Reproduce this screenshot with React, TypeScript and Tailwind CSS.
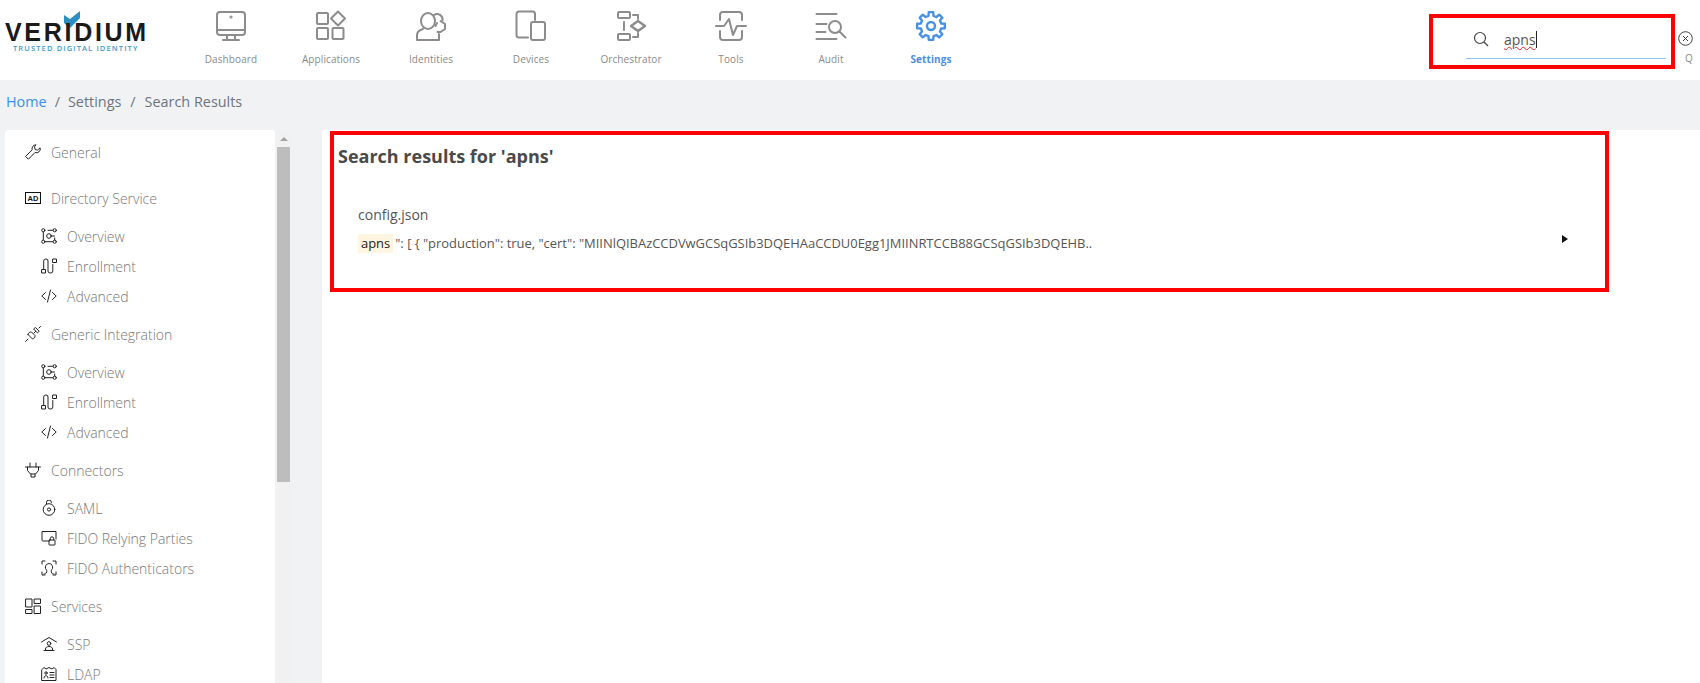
import type { ReactNode } from "react";

const navGray = "#8c8c8c";
const navBlue = "#4a90e2";

function NavSvg({ children, color = navGray, weight = 2 }: { children: ReactNode; color?: string; weight?: number }) {
	return (
		<svg width="32" height="32" viewBox="0 0 32 32" fill="none" stroke={color} strokeWidth={weight} strokeLinecap="round" strokeLinejoin="round">
			{children}
		</svg>
	);
}

// 8 tooth gear outline, tooth pointing straight up
function gearPath(cx: number, cy: number, outer: number, inner: number) {
	const pt = (r: number, deg: number) => {
		const a = ((deg - 90) * Math.PI) / 180;
		return `${(cx + r * Math.cos(a)).toFixed(2)} ${(cy + r * Math.sin(a)).toFixed(2)}`;
	};
	let d = "";
	for (let i = 0; i < 8; i++) {
		const c = i * 45;
		d += `${i === 0 ? "M" : "L"}${pt(inner, c - 14)} L${pt(outer, c - 9)} L${pt(outer, c + 9)} L${pt(inner, c + 14)} `;
	}
	return d + "Z";
}

const navItems: { label: string; active?: boolean; icon: ReactNode }[] = [
	{
		label: "Dashboard",
		icon: (
			<NavSvg>
				<rect x="2" y="2" width="28" height="23" rx="3" />
				<path d="M2 20h28M12 25v5M20 25v5M8 30h16" />
				<circle cx="16" cy="7" r="0.6" />
			</NavSvg>
		),
	},
	{
		label: "Applications",
		icon: (
			<NavSvg>
				<rect x="2" y="3" width="11" height="11" rx="1" />
				<path d="M23 1.500l7 7-7 7-7-7z" />
				<rect x="2" y="18" width="11" height="11" rx="1" />
				<rect x="17.500" y="18" width="11" height="11" rx="1" />
			</NavSvg>
		),
	},
	{
		label: "Identities",
		icon: (
			<NavSvg>
				<ellipse cx="13" cy="11" rx="7" ry="8" />
				<path d="M19 5a5.500 5.500 0 0 1 8.500 5.500" />
				<path d="M25.500 11l4.500 3v5l-4.500 3h-3" />
				<path d="M20.500 16l1.500-3" />
				<path d="M8 19c-3.500 1-6 3-6 6v5h22v-6" />
			</NavSvg>
		),
	},
	{
		label: "Devices",
		icon: (
			<NavSvg>
				<path d="M20 10V4a2.500 2.500 0 0 0-2.500-2.500H4A2.500 2.500 0 0 0 1.500 4v21A2.500 2.500 0 0 0 4 27.500h9" />
				<rect x="16" y="12" width="14" height="18" rx="2" />
			</NavSvg>
		),
	},
	{
		label: "Orchestrator",
		icon: (
			<NavSvg>
				<rect x="3" y="2" width="12" height="6" rx="1" />
				<rect x="3" y="24" width="12" height="6" rx="1" />
				<path d="M9 12v8M18 5h5v4M18 27h5v-4" />
				<path d="M23 11l7 5-7 5-7-5z" strokeWidth="2.400" />
			</NavSvg>
		),
	},
	{
		label: "Tools",
		icon: (
			<NavSvg>
				<path d="M5 10V5a3 3 0 0 1 3-3h16a3 3 0 0 1 3 3v5M5 21v6a3 3 0 0 0 3 3h16a3 3 0 0 0 3-3v-6" />
				<path d="M1 16h8l5-7 4 16 4-9h9" />
			</NavSvg>
		),
	},
	{
		label: "Audit",
		icon: (
			<NavSvg>
				<path d="M1.500 4h20M1.500 14h10M1.500 22h9M1.500 29h20" />
				<circle cx="20" cy="17" r="6" />
				<path d="M24.500 21.500l6 6" />
			</NavSvg>
		),
	},
	{
		label: "Settings",
		active: true,
		icon: (
			<NavSvg color={navBlue} weight={2.400}>
				<path d={gearPath(16, 16, 14, 10.500)} />
				<circle cx="16" cy="16" r="4" />
			</NavSvg>
		),
	},
];

function SideSvg({ children }: { children: ReactNode }) {
	return (
		<svg width="16" height="16" viewBox="0 0 16 16" fill="none" stroke="#222" strokeWidth="1" strokeLinecap="round" strokeLinejoin="round" className="shrink-0">
			{children}
		</svg>
	);
}

const WrenchIcon = (
	<SideSvg>
		<path d="M10.500.8a3.800 3.800 0 0 0-3.300 5L.6 12.400l2.800 2.800 6.600-6.700a3.800 3.800 0 0 0 5.100-4.700l-2.500 2.300-2.400-.6-.6-2.300z" />
	</SideSvg>
);
const AdIcon = (
	<svg width="16" height="12" viewBox="0 0 16 12" className="shrink-0">
		<rect x="0.500" y="0.500" width="15" height="11" fill="none" stroke="#111" />
		<text x="8" y="9" textAnchor="middle" fontSize="7.500" fontWeight="700" fontFamily="'Liberation Sans', sans-serif" fill="#111">AD</text>
	</svg>
);
const OverviewIcon = (
	<SideSvg>
		<circle cx="2.300" cy="2.300" r="1.600" />
		<circle cx="13.700" cy="2.300" r="1.600" />
		<circle cx="2.300" cy="13.700" r="1.600" />
		<circle cx="13.700" cy="13.700" r="1.600" />
		<circle cx="8" cy="8" r="2.300" />
		<path d="M2.300 4v8M4 13.700h8M13.700 12v-2M7 2.300h5M10 8h3.500" />
	</SideSvg>
);
const EnrollIcon = (
	<SideSvg>
		<rect x="1" y="11.500" width="3.500" height="3.500" />
		<rect x="12" y="1" width="3.500" height="3.500" />
		<path d="M2.700 11.500V3a2 2 0 0 1 2-2h.3a2 2 0 0 1 2 2v10a2 2 0 0 0 2 2h.8a2 2 0 0 0 2-2V6.500" />
	</SideSvg>
);
const CodeIcon = (
	<SideSvg>
		<path d="M4.500 4.500L.8 8l3.700 3.500M11.500 4.500L15.200 8l-3.700 3.500M9.500 2L6.500 14" />
	</SideSvg>
);
const PlugIcon = (
	<SideSvg>
		<path d="M.5 15.500l2.500-2.500M3 8.500l4.500 4.500c1.500-.3 2.800-1.500 2.500-3.500L6.500 6C4.700 5.700 3.300 7 3 8.500z" />
		<path d="M9 7l1.800-1.800M10.700 1.800l3.500 3.500-1.800 1.500-3.500-3.500zM14 2l1.500-1.500" />
	</SideSvg>
);
const ConnectorIcon = (
	<SideSvg>
		<path d="M.5 5h15M5 1v4M11 1v4M2.500 5v3.500L5.500 12h5l3-3.500V5M6 12v3h4v-3" />
	</SideSvg>
);
const SamlIcon = (
	<SideSvg>
		<path d="M5.500 4V2.500a2.500 2.500 0 0 1 5 0" />
		<circle cx="8" cy="9.500" r="5.800" />
		<circle cx="8" cy="9.500" r="1.600" />
	</SideSvg>
);
const RelyingIcon = (
	<SideSvg>
		<path d="M8 11H2a1 1 0 0 1-1-1V1.500h14V9" />
		<rect x="8" y="10" width="6" height="5" rx="0.500" />
		<path d="M9.300 10V8.500a1.700 1.700 0 0 1 3.400 0V10" />
	</SideSvg>
);
const AuthIcon = (
	<SideSvg>
		<path d="M1 4V1h3M12 1h3v3M1 12v3h3M12 15h3v-3" />
		<path d="M5.500 12.500c.5-1.500.5-2-1-4-.8-2 .8-5 3.500-5s4.300 3 3.500 5c-1.500 2-1.500 2.500-1 4" />
		<path d="M3 14c1 0 2 0 2.500-1.500M13 14c-1 0-2 0-2.500-1.500" />
	</SideSvg>
);
const ServicesIcon = (
	<SideSvg>
		<rect x="1" y="1" width="6" height="8" />
		<rect x="9.500" y="1" width="6" height="4.500" />
		<rect x="1" y="11.500" width="6" height="4" />
		<rect x="9.500" y="8" width="6" height="7.500" />
	</SideSvg>
);
const SspIcon = (
	<SideSvg>
		<path d="M.5 6L8 1.500 15.500 6" />
		<circle cx="8" cy="7.500" r="1.800" />
		<path d="M4.500 14v-1c0-1.500 1.500-2.500 3.500-2.500s3.500 1 3.500 2.500v1zM3 14.500h10" />
	</SideSvg>
);
const LdapIcon = (
	<SideSvg>
		<path d="M1 3.500l2-2 2 1.500 3-1.500 3 1.500 2-1.500 2 2v11H1z" />
		<circle cx="5" cy="7" r="1.200" />
		<path d="M3 12c0-1.500 1-2.300 2-2.300s2 .8 2 2.300M9 6.500h4M9 9h4M9 11.500h4" />
	</SideSvg>
);

const sideGroups: { label: string; icon: ReactNode; gap: string; items: { label: string; icon: ReactNode }[] }[] = [
	{ label: "General", icon: WrenchIcon, gap: "mb-[16px]", items: [] },
	{
		label: "Directory Service",
		icon: AdIcon,
		gap: "mb-[8px]",
		items: [
			{ label: "Overview", icon: OverviewIcon },
			{ label: "Enrollment", icon: EnrollIcon },
			{ label: "Advanced", icon: CodeIcon },
		],
	},
	{
		label: "Generic Integration",
		icon: PlugIcon,
		gap: "mb-[8px]",
		items: [
			{ label: "Overview", icon: OverviewIcon },
			{ label: "Enrollment", icon: EnrollIcon },
			{ label: "Advanced", icon: CodeIcon },
		],
	},
	{
		label: "Connectors",
		icon: ConnectorIcon,
		gap: "mb-[8px]",
		items: [
			{ label: "SAML", icon: SamlIcon },
			{ label: "FIDO Relying Parties", icon: RelyingIcon },
			{ label: "FIDO Authenticators", icon: AuthIcon },
		],
	},
	{
		label: "Services",
		icon: ServicesIcon,
		gap: "mb-[8px]",
		items: [
			{ label: "SSP", icon: SspIcon },
			{ label: "LDAP", icon: LdapIcon },
		],
	},
];

function Sidebar() {
	return (
		<aside className="w-[270px] h-full shrink-0 bg-white rounded-t overflow-hidden pt-[7px]">
			{sideGroups.map((group) => (
				<div key={group.label} className={group.gap}>
					<div className="flex items-center h-[30px] mb-[8px] pl-[20px] gap-[10px] text-[14px] font-light text-[#777]">
						<span className="w-[16px] flex justify-center">{group.icon}</span>
						<span>{group.label}</span>
					</div>
					{group.items.map((item) => (
						<div key={item.label} className="flex items-center h-[30px] pl-[36px] gap-[10px] text-[14px] font-light text-[#777]">
							<span className="w-[16px] flex justify-center">{item.icon}</span>
							<span>{item.label}</span>
						</div>
					))}
				</div>
			))}
		</aside>
	);
}

function Scrollbar() {
	return (
		<div className="w-[13px] h-full ml-[2px] shrink-0 bg-[#f1f1f1] flex flex-col">
			<div className="h-[17px] flex items-center justify-center">
				<div className="w-0 h-0 border-x-[4px] border-x-transparent border-b-[4px] border-b-[#a3a3a3]" />
			</div>
			<div className="h-[335px] bg-[#bdbdbd]" />
		</div>
	);
}

export default function App() {
	return (
		<div className="h-[683px] w-[1700px] overflow-hidden bg-[#f1f2f4] font-['Open_Sans',sans-serif]">
			<header className="h-20 bg-white flex">
				<div className="w-[181px] shrink-0 relative">
					<svg width="17" height="17" viewBox="0 0 17 17" className="absolute left-[64px] top-[11px]">
						<path d="M0 4l6 4L16 0v7L6 17 0 12z" fill="#2a8fc0" />
					</svg>
					<div className="absolute left-[5px] top-[22px] text-[25px] leading-[20px] font-bold tracking-[2.700px] text-[#1a1a1a] font-['Liberation_Sans',sans-serif]">VERIDIUM</div>
					<div className="absolute left-[13px] top-[43px] text-[7.500px] leading-[10px] font-semibold tracking-[1.130px] whitespace-nowrap text-[#3b9ccc]">TRUSTED DIGITAL IDENTITY</div>
				</div>
				<nav className="flex">
					{navItems.map((item) => (
						<div key={item.label} className="w-[100px] flex flex-col items-center pt-[10px]">
							<div className="h-[32px]">{item.icon}</div>
							<div className={`mt-[10px] text-[10px] leading-[14px] tracking-[0.1px] ${item.active ? "font-bold text-[#4a90e2]" : "text-[#8a8a8a]"}`}>{item.label}</div>
						</div>
					))}
				</nav>
				<div className="flex-1" />
				<div className="w-[271px] shrink-0 pt-[14px] flex items-start">
					<div className="w-[246px] h-[55px] border-[4px] border-[#ff0000] pl-[33px] pr-[5px]">
						<div className="h-[41px] border-b border-[#8cc3f5] flex items-center pt-[2px]">
							<svg width="16" height="16" viewBox="0 0 16 16" fill="none" stroke="#444" strokeWidth="1.200" className="ml-[7px]">
								<circle cx="7" cy="7" r="5.500" />
								<path d="M11 11l4 4" />
							</svg>
							<span className="ml-[15px] text-[14px] text-[#555] underline decoration-wavy decoration-[#e02020] decoration-1">apns</span>
							<span className="w-px h-[17px] bg-[#222]" />
						</div>
					</div>
					<div className="ml-[3px] pt-[17px] flex flex-col items-center relative">
						<svg width="15" height="15" viewBox="0 0 15 15" fill="none" stroke="#444" strokeWidth="1">
							<circle cx="7.500" cy="7.500" r="6.800" />
							<path d="M5 5l5 5M10 5l-5 5" />
						</svg>
						<span className="absolute left-[7px] top-[37px] text-[10px] leading-[14px] text-[#8a8a8a]">Q</span>
					</div>
				</div>
			</header>
			<div className="h-[50px] flex items-center px-[6px] pb-[6px] text-[14.400px] text-[#6c757d]">
				<span className="text-[#3b8ff0]">Home</span>
				<span className="mx-[8px]">/</span>
				<span>Settings</span>
				<span className="mx-[9px]">/</span>
				<span>Search Results</span>
			</div>
			<div className="flex h-[553px] pl-[5px]">
				<Sidebar />
				<Scrollbar />
				<main className="flex-1 ml-[32px] bg-white rounded-tl pl-[8px] pt-px">
					<section className="w-[1279px] h-[161px] border-[4px] border-[#ff0000] pl-[4px] pt-[7px]">
						<h2 className="text-[18px] leading-[28px] font-bold text-[#4a4a4a]">Search results for 'apns'</h2>
						<div className="mt-[35px] ml-[20px] text-[14px] leading-[20px] text-[#555]">config.json</div>
						<div className="mt-[9px] ml-[20px] flex items-center pr-[37px]">
							<span className="h-[19px] px-[3px] bg-[#fff6e2] text-[12.950px] leading-[19px] text-[#222]">apns</span>
							<span className="ml-[2px] text-[12.950px] leading-[19px] text-[#555] whitespace-nowrap">": [ {"{"} "production": true, "cert": "MIINlQIBAzCCDVwGCSqGSIb3DQEHAaCCDU0Egg1JMIINRTCCB88GCSqGSIb3DQEHB..</span>
							<div className="ml-auto -mt-[10px] w-0 h-0 border-y-[4px] border-y-transparent border-l-[6px] border-l-[#111]" />
						</div>
					</section>
				</main>
			</div>
		</div>
	);
}
